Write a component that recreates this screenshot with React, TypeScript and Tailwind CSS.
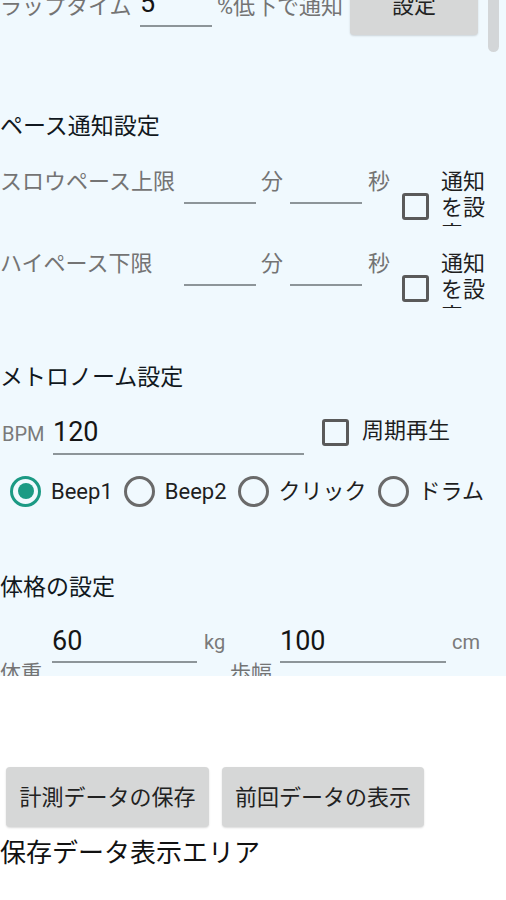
import React from "react";

const FONT = { fontFamily: 'Roboto, "Noto Sans CJK JP", sans-serif' };

function Underline({
  w,
  h,
  pb,
  value,
  ml,
}: {
  w: string;
  h: string;
  pb: string;
  value?: string;
  ml?: string;
}) {
  return (
    <div
      className={`${w} ${h} ${pb} ${ml ?? ""} flex shrink-0 items-end border-b-2 border-[#8d9599] text-[27px] leading-none text-[#151515]`}
    >
      {value}
    </div>
  );
}

function Check({ mt, ml }: { mt: string; ml: string }) {
  return (
    <div
      className={`${mt} ${ml} h-[27px] w-[27px] shrink-0 rounded-[3px] border-[3px] border-[#5a5a5a]`}
    />
  );
}

function Radio({ checked, ml }: { checked?: boolean; ml?: string }) {
  return checked ? (
    <div
      className={`${ml ?? ""} flex h-[31px] w-[31px] shrink-0 items-center justify-center rounded-full border-[3px] border-[#1b9a84]`}
    >
      <div className="h-[16px] w-[16px] rounded-full bg-[#1b9a84]" />
    </div>
  ) : (
    <div
      className={`${ml ?? ""} h-[31px] w-[31px] shrink-0 rounded-full border-[3px] border-[#6a6a6a]`}
    />
  );
}

function PaceRow({ label }: { label: string }) {
  return (
    <div className="flex h-[82px] items-start text-[22px] leading-[27px]">
      <div className="w-[184px] shrink-0 text-[#747474]">{label}</div>
      <Underline w="w-[72px]" h="h-[36px]" pb="pb-0" />
      <div className="ml-[5px] w-[22px] shrink-0 text-[#747474]">分</div>
      <Underline w="w-[72px]" h="h-[36px]" pb="pb-0" ml="ml-[7px]" />
      <div className="ml-[6px] w-[22px] shrink-0 text-[#747474]">秒</div>
      <Check mt="mt-[25px]" ml="ml-[12px]" />
      <div className="ml-[12px] mt-[1px] h-[57px] w-[44px] shrink-0 overflow-hidden leading-[26px] text-[#1e1e1e]">
        通知を設定
      </div>
    </div>
  );
}

export default function App() {
  return (
    <div className="min-h-[900px] w-[506px] bg-white" style={FONT}>
      {/* scroll area */}
      <div className="relative h-[676px] overflow-hidden bg-[#f0f9fe]">
        <div className="-mt-[25px]">
          {/* top row */}
          <div className="flex h-[60px] items-start text-[22px] leading-[27px]">
            <div className="mt-[18px] w-[132px] shrink-0 text-[#747474]">
              ラップタイム
            </div>
            <Underline w="w-[72px]" h="h-[52px]" pb="pb-[8px]" value="5" ml="ml-[8px]" />
            <div className="ml-[5px] mt-[18px] w-[133px] shrink-0 text-[#747474]">
              %低下で通知
            </div>
            <button className="ml-[0px] flex h-[60px] w-[128px] shrink-0 items-center justify-center rounded-[4px] bg-[#d6d7d7] text-[22px] text-[#222] shadow-[0_1px_2px_rgba(0,0,0,0.15)]">
              設定
            </button>
          </div>

          {/* pace heading */}
          <div className="mt-[78px] h-[28px] text-[23px] leading-[28px] text-[#111820]">
            ペース通知設定
          </div>
          <div className="mt-[27px]">
            <PaceRow label="スロウペース上限" />
            <PaceRow label="ハイペース下限" />
          </div>

          {/* metronome heading */}
          <div className="mt-[32px] h-[28px] text-[23px] leading-[28px] text-[#111820]">
            メトロノーム設定
          </div>
          <div className="mt-[18px] flex h-[46px] items-start">
            <div className="ml-[2px] mt-[14px] w-[51px] shrink-0 text-[20px] leading-none text-[#7a7a7a]">
              BPM
            </div>
            <Underline w="w-[251px]" h="h-[45px]" pb="pb-[7px]" value="120" />
            <Check mt="mt-[9px]" ml="ml-[18px]" />
            <div className="ml-[13px] mt-[7px] text-[22px] leading-[27px] text-[#1e1e1e]">
              周期再生
            </div>
          </div>

          {/* radios */}
          <div className="mt-[14px] flex h-[42px] items-center text-[22px] text-[#1e1e1e]">
            <Radio checked ml="ml-[10px]" />
            <span className="ml-[10px]">Beep1</span>
            <Radio ml="ml-[11px]" />
            <span className="ml-[10px]">Beep2</span>
            <Radio ml="ml-[11px]" />
            <span className="ml-[10px]">クリック</span>
            <Radio ml="ml-[11px]" />
            <span className="ml-[10px]">ドラム</span>
          </div>

          {/* body heading */}
          <div className="mt-[62px] h-[28px] text-[23px] leading-[28px] text-[#111820]">
            体格の設定
          </div>
          <div className="mt-[8px] flex h-[80px] items-start">
            <div className="mt-[50px] w-[52px] shrink-0 text-[21px] leading-[26px] text-[#747474]">
              体重
            </div>
            <Underline w="w-[145px]" h="h-[53px]" pb="pb-[6px]" value="60" />
            <div className="ml-[7px] mt-[22px] w-[26px] shrink-0 text-[20px] leading-none text-[#7a7a7a]">
              kg
            </div>
            <div className="mt-[50px] w-[50px] shrink-0 text-[21px] leading-[26px] text-[#747474]">
              歩幅
            </div>
            <Underline w="w-[166px]" h="h-[53px]" pb="pb-[6px]" value="100" />
            <div className="ml-[6px] mt-[22px] shrink-0 text-[20px] leading-none text-[#7a7a7a]">
              cm
            </div>
          </div>
        </div>

        {/* scrollbar */}
        <div className="absolute left-[488px] top-[-10px] h-[62px] w-[11px] rounded-full bg-[#d3d6d8]" />
      </div>

      {/* buttons */}
      <div className="mt-[91px] flex gap-[13px] pl-[6px]">
        <button className="flex h-[60px] w-[203px] items-center justify-center rounded-[4px] bg-[#d6d7d7] text-[22px] text-[#222] shadow-[0_1px_2px_rgba(0,0,0,0.15)]">
          計測データの保存
        </button>
        <button className="flex h-[60px] w-[202px] items-center justify-center rounded-[4px] bg-[#d6d7d7] text-[22px] text-[#222] shadow-[0_1px_2px_rgba(0,0,0,0.15)]">
          前回データの表示
        </button>
      </div>
      <div className="mt-[10px] text-[26px] leading-[32px] text-[#111]">
        保存データ表示エリア
      </div>
    </div>
  );
}
